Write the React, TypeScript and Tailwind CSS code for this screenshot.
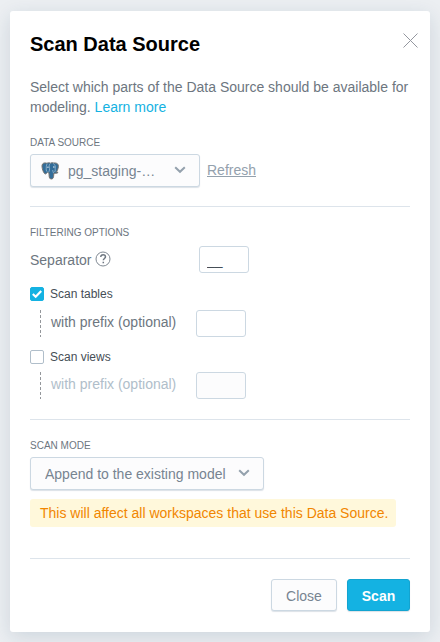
import { useState, type ReactNode } from "react";

const boxShadow = "shadow-[0_1px_1px_rgba(20,56,93,0.15)]";
const inputClass =
  "h-[27px] w-[50px] rounded-[3px] border border-[#ccd8e2] bg-white px-[7px] text-sm text-[#464e56] outline-none focus:border-[#14b2e2] disabled:bg-[#fcfcfd]";

function SectionLabel({ children, htmlFor }: { children: ReactNode; htmlFor?: string }) {
  const className = "block text-[10px] leading-5 text-[#6d7680] uppercase";
  return htmlFor ? (
    <label htmlFor={htmlFor} className={className}>
      {children}
    </label>
  ) : (
    <h2 className={className}>{children}</h2>
  );
}

function Chevron() {
  return (
    <svg viewBox="0 0 12 8" className="pointer-events-none absolute top-3 right-3.5 h-2 w-3" aria-hidden="true">
      <path d="M1.2 1.2 6 5.8l4.8-4.6" fill="none" stroke="#94a1ad" strokeWidth="2" />
    </svg>
  );
}

function PostgresIcon() {
  return (
    <svg viewBox="0 0 18 18" className="pointer-events-none absolute top-2 left-[11px] h-[18px] w-[18px]" aria-hidden="true">
      <path
        d="M4.200.9C2 .8.8 2.300 1 4.600c.3 2.700 1.300 5.800 2.600 7 .8.7 1.500.3 2.200-.5l.9-.9c.3.5.8.6 1.300.6l.1 2.900c.1 2 .7 3.300 2.100 3.300 1.600 0 2.200-1 2.400-2.600l.3-3.200c1.800.3 3.500 0 4.200-.8-.6-.2-1.200-.1-1.700-.3 1.500-2.100 2.200-5.100 1.900-6.900C16.900 1.500 15 .7 12.700 1c-.9-.3-2.300-.3-3.200.2C8 .5 6.400 1 5.700 1.200 5.200 1 4.700.9 4.200.9Z"
        fill="#336d99"
        stroke="#77736f"
        strokeWidth="1"
      />
      <path
        d="M6.200 1.800C4.900 3.200 5.400 6 5.200 8c0 .9.700 1.700 1.400 2.100M9.300 1.500C7.900 2.600 8.200 4.300 8.500 5.600c.3 1.600-.2 3.600-.9 4.600M12.200 1.400c1.800 1.300 2.500 3 2 4.800-.2 1.300.5 2.500-.6 3.800M12.500 11c-.3-1-.8-1.800-.8-2.900"
        fill="none"
        stroke="#a9c6da"
        strokeWidth=".7"
      />
      <path d="M6.300 5.200h1.300M12.100 5h1.400" stroke="#fff" strokeWidth="1" />
    </svg>
  );
}

function Checkbox({ label, checked, onChange }: { label: string; checked: boolean; onChange: (value: boolean) => void }) {
  return (
    <label className="flex items-center gap-1.5 text-xs leading-4 text-[#464e56]">
      <span className="relative flex h-3.5 w-3.5">
        <input
          type="checkbox"
          checked={checked}
          onChange={(event) => onChange(event.target.checked)}
          className="h-3.5 w-3.5 appearance-none rounded-[2px] border border-[#b0beca] bg-white checked:border-[#14b2e2] checked:bg-[#14b2e2]"
        />
        {checked && (
          <svg viewBox="0 0 14 14" className="pointer-events-none absolute inset-0" aria-hidden="true">
            <path d="m2.800 7 2.900 2.800L11.200 4" fill="none" stroke="#fff" strokeWidth="2.200" />
          </svg>
        )}
      </span>
      {label}
    </label>
  );
}

function PrefixRow({ id, enabled }: { id: string; enabled: boolean }) {
  return (
    <div className="ml-2.5 flex items-center">
      <svg className="h-[27px] w-px" viewBox="0 0 1 27" aria-hidden="true">
        <path d="M.5 0v27" stroke="#94979b" strokeDasharray="3 2" />
      </svg>
      <label htmlFor={id} className={`w-[155px] pb-[3px] pl-2.5 text-sm leading-5 ${enabled ? "text-[#6d7680]" : "text-[#b0beca]"}`}>
        with prefix (optional)
      </label>
      <input id={id} type="text" disabled={!enabled} className={inputClass} />
    </div>
  );
}

export default function App() {
  const [tables, setTables] = useState(true);
  const [views, setViews] = useState(false);
  const [separator, setSeparator] = useState("__");

  return (
    <div className="min-h-screen bg-[#eceff2] px-2.5 pt-[11px] pb-2.5 font-['Liberation_Sans',Arial,sans-serif] text-sm text-[#6d7680]">
      <main
        role="dialog"
        aria-labelledby="dialog-title"
        className="rounded-[3px] bg-white px-5 pt-5 pb-[21px] shadow-[0_5px_20px_rgba(20,56,93,0.14)]"
      >
        <header className="flex items-start justify-between">
          <h1 id="dialog-title" className="text-xl leading-[26px] font-bold text-black">
            Scan Data Source
          </h1>
          <button type="button" aria-label="Close dialog" className="-mr-2 pt-0.5">
            <svg viewBox="0 0 15 15" className="h-[15px] w-[15px]" aria-hidden="true">
              <path d="m.5.5 14 14M14.500.5l-14 14" fill="none" stroke="#94979f" strokeWidth="1" />
            </svg>
          </button>
        </header>

        <p className="mt-5 leading-5">
          Select which parts of the Data Source should be available for modeling.{" "}
          <a href="#learn" className="text-[#14b2e2]">
            Learn more
          </a>
        </p>

        <section className="mt-4 border-b border-[#dde4eb] pb-[19px]">
          <SectionLabel htmlFor="source">Data source</SectionLabel>
          <div className="mt-px flex items-center gap-[7px]">
            <div className="relative">
              <select
                id="source"
                className={`block h-[33px] w-[170px] appearance-none rounded-[3px] border border-[#ccd8e2] bg-[#fcfcfd] pr-8 pl-[37px] text-sm text-[#778491] ${boxShadow}`}
              >
                <option>pg_staging-…</option>
              </select>
              <PostgresIcon />
              <Chevron />
            </div>
            <a href="#refresh" className="pb-0.5 leading-5 text-[#94a1ad] underline">
              Refresh
            </a>
          </div>
        </section>

        <section className="mt-4 border-b border-[#dde4eb] pb-5">
          <SectionLabel>Filtering options</SectionLabel>
          <div className="mt-[3px] flex items-center">
            <div className="flex w-[169px] items-center gap-1">
              <label htmlFor="separator" className="leading-5">
                Separator
              </label>
              <button type="button" aria-label="About the separator" className="pb-0.5">
                <svg viewBox="0 0 16 16" className="h-4 w-4" aria-hidden="true">
                  <circle cx="8" cy="8" r="7" fill="none" stroke="#808993" />
                  <path d="M5.700 6.100c0-1.600 1-2.400 2.400-2.400s2.400.9 2.400 2.100c0 1.700-2.200 1.700-2.200 3.500M8.300 10.700v1.600" fill="none" stroke="#6d7680" strokeWidth="1.500" />
                </svg>
              </button>
            </div>
            <input
              id="separator"
              type="text"
              value={separator}
              onChange={(event) => setSeparator(event.target.value)}
              className={inputClass}
            />
          </div>
          <div className="mt-[13px] flex flex-col gap-2">
            <Checkbox label="Scan tables" checked={tables} onChange={setTables} />
            <PrefixRow id="tables-prefix" enabled={tables} />
          </div>
          <div className="mt-3 flex flex-col gap-[7px]">
            <Checkbox label="Scan views" checked={views} onChange={setViews} />
            <PrefixRow id="views-prefix" enabled={views} />
          </div>
        </section>

        <section className="mt-4 border-b border-[#dde4eb] pb-[31px]">
          <SectionLabel htmlFor="mode">Scan mode</SectionLabel>
          <div className="relative mt-px w-[234px]">
            <select
              id="mode"
              className={`block h-[33px] w-full appearance-none rounded-[3px] border border-[#ccd8e2] bg-[#fcfcfd] pr-8 pl-3.5 text-sm text-[#778491] ${boxShadow}`}
            >
              <option>Append to the existing model</option>
            </select>
            <Chevron />
          </div>
          <p className="mt-[9px] w-fit rounded-[3px] bg-[#fff8db] py-1 pr-2 pl-2.5 leading-5 text-[#f18600]">
            This will affect all workspaces that use this Data Source.
          </p>
        </section>

        <footer className="mt-5 flex justify-end gap-2.5">
          <button type="button" className={`h-8 w-[66px] rounded-[3px] border border-[#ccd8e2] bg-[#fcfcfd] pt-0.5 text-[#778491] ${boxShadow}`}>
            Close
          </button>
          <button type="button" className={`h-8 w-[63px] rounded-[3px] border border-[#13a4d0] bg-[#14b2e2] pt-0.5 font-bold text-white ${boxShadow}`}>
            Scan
          </button>
        </footer>
      </main>
    </div>
  );
}
